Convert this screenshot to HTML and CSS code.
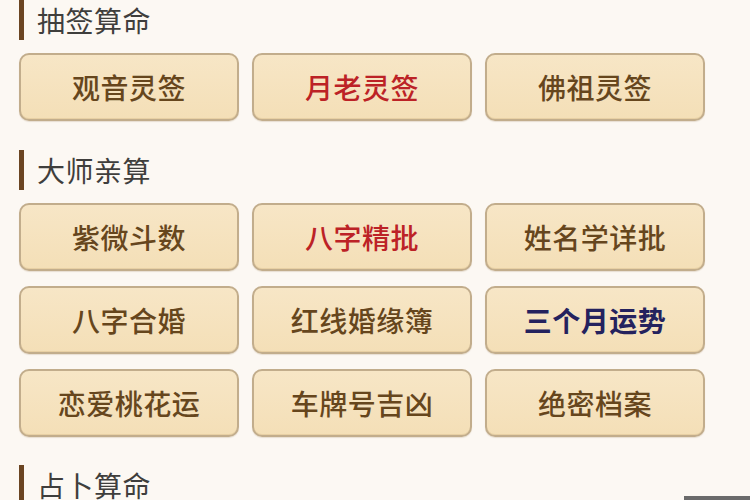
FILE: index.html
```html
<!DOCTYPE html>
<html lang="zh">
<head>
<meta charset="utf-8">
<link rel="stylesheet" href="styles.css">
</head>
<body>
<div class="page">
  <section class="section">
    <h2 class="title">抽签算命</h2>
    <div class="grid">
      <div class="btn">观音灵签</div>
      <div class="btn red">月老灵签</div>
      <div class="btn">佛祖灵签</div>
    </div>
  </section>
  <section class="section">
    <h2 class="title">大师亲算</h2>
    <div class="grid">
      <div class="btn">紫微斗数</div>
      <div class="btn red">八字精批</div>
      <div class="btn">姓名学详批</div>
      <div class="btn">八字合婚</div>
      <div class="btn">红线婚缘簿</div>
      <div class="btn navy">三个月运势</div>
      <div class="btn">恋爱桃花运</div>
      <div class="btn">车牌号吉凶</div>
      <div class="btn">绝密档案</div>
    </div>
  </section>
  <section class="section">
    <h2 class="title">占卜算命</h2>
  </section>
  <div class="mark"></div>
</div>
</body>
</html>
```

FILE: styles.css
```css
html, body {
  margin: 0;
  padding: 0;
  background: #fcf8f3;
}
.page {
  width: 750px;
  height: 500px;
  overflow: hidden;
  position: relative;
  padding-left: 19px;
  box-sizing: border-box;
  font-family: "Noto Sans CJK SC", "Noto Sans", sans-serif;
}
.section {
  margin-bottom: 29px;
}
.section:nth-child(2) {
  margin-bottom: 28px;
}
.title {
  margin: 0 0 13px 0;
  height: 40px;
  display: flex;
  align-items: center;
  border-left: 5px solid #6b4522;
  padding-left: 13px;
  font-size: 28px;
  font-weight: 400;
  color: #3f3e3c;
  line-height: 40px;
  letter-spacing: 0.5px;
}
.grid {
  display: grid;
  grid-template-columns: repeat(3, 220px);
  column-gap: 13px;
  row-gap: 15px;
}
.btn {
  height: 68px;
  box-sizing: border-box;
  border: 2px solid #c2ad8c;
  border-radius: 10px;
  background: linear-gradient(#f7e6c6, #f4dfb7);
  box-shadow: inset 0 -1px 0 #e8d0a4, 0 1px 1px rgba(150, 120, 80, 0.2);
  display: flex;
  align-items: center;
  justify-content: center;
  font-size: 28px;
  font-weight: 500;
  color: #66461d;
  letter-spacing: 0.5px;
}
.red {
  color: #bc2226;
}
.navy {
  color: #24225e;
  font-weight: 700;
}
.mark {
  position: absolute;
  left: 684px;
  top: 496px;
  width: 66px;
  height: 4px;
  background: #6a6a6a;
}
```
